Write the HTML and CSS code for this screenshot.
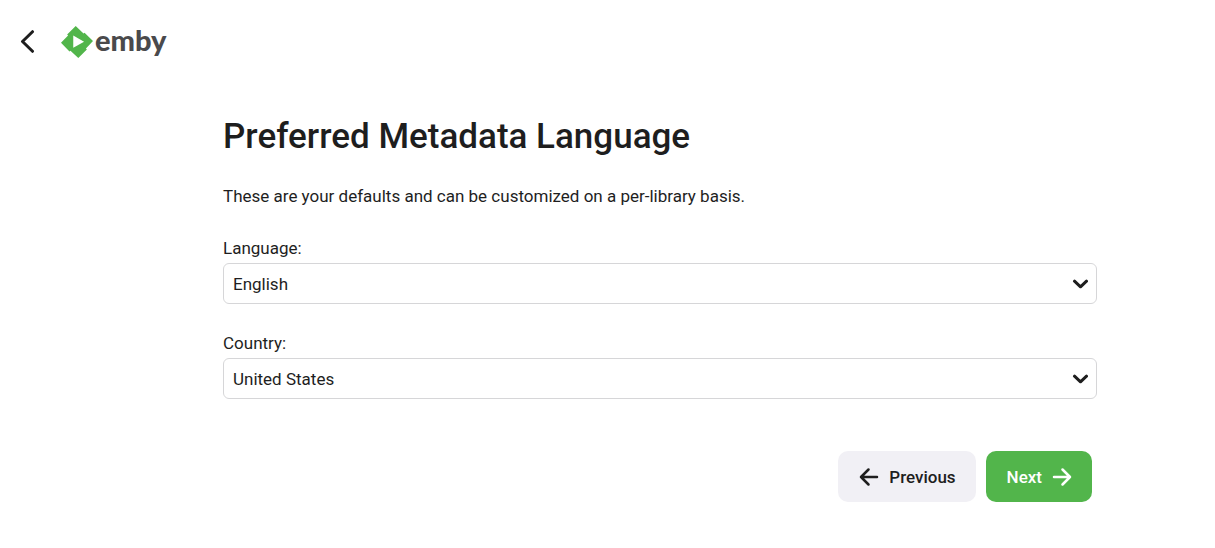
FILE: index.html
```html
<!DOCTYPE html>
<html lang="en">

<head>
  <meta charset="UTF-8">
  <meta name="viewport" content="width=device-width, initial-scale=1.0">
  <title>Emby</title>
  <link rel="stylesheet" href="styles.css">
</head>

<body>
  <header class="header">
    <button type="button" class="back-button" aria-label="Back">
      <svg viewBox="0 0 16 24" width="16" height="24">
        <path d="M12.500 1.700L2.500 11.500L12.500 21.300" />
      </svg>
    </button>
    <a href="#" class="logo">
      <svg class="logo-mark" viewBox="0 0 24 24" width="32" height="32" aria-hidden="true">
        <path d="M11.040 0L4.615 6.352L5.300 7.050L0 12.500L6.363 19.100L7.100 18.500L12.970 24L19.394 17.646L18.700 16.900L24 11.300L17.650 5.060L16.900 5.700Z" />
        <path class="logo-play" d="M9.200 7.200L17.300 11.800L9.200 16.300Z" />
      </svg>
      <span class="logo-text">emby</span>
    </a>
  </header>

  <main class="wizard">
    <h1>Preferred Metadata Language</h1>
    <p class="description">These are your defaults and can be customized on a per-library basis.</p>
    <form id="settings-form">
      <div class="form-group">
        <label for="language">Language:</label>
        <div class="select-box">
          <select id="language" name="language">
            <option selected>English</option>
          </select>
          <svg class="arrow" viewBox="0 0 16 10" width="16" height="10" aria-hidden="true">
            <path d="M2.500 2.200L8.500 7.800L14.500 2.200" />
          </svg>
        </div>
      </div>
      <div class="form-group">
        <label for="country">Country:</label>
        <div class="select-box">
          <select id="country" name="country">
            <option selected>United States</option>
          </select>
          <svg class="arrow" viewBox="0 0 16 10" width="16" height="10" aria-hidden="true">
            <path d="M2.500 2.200L8.500 7.800L14.500 2.200" />
          </svg>
        </div>
      </div>
      <div class="actions">
        <button type="button" class="button">
          <svg viewBox="0 0 20 20" width="20" height="20" aria-hidden="true">
            <path d="M9.500 2.500L2 10L9.500 17.500M2 10H18" />
          </svg>
          Previous
        </button>
        <button type="submit" class="button button-submit">
          Next
          <svg viewBox="0 0 20 20" width="20" height="20" aria-hidden="true">
            <path d="M10.500 2.500L18 10L10.500 17.500M18 10H2" />
          </svg>
        </button>
      </div>
    </form>
  </main>
</body>

</html>
```

FILE: styles.css
```css
* {
  box-sizing: border-box;
}

body {
  margin: 0;
  background-color: #fff;
  color: #1e1e1e;
  font-family: Roboto, sans-serif;
  font-size: 17px;
  line-height: 20px;
}

.header {
  display: flex;
  align-items: center;
  gap: 16px;
  height: 84px;
  padding: 0 10px;
}

.back-button {
  display: flex;
  align-items: center;
  justify-content: center;
  width: 35px;
  height: 40px;
  padding: 0;
  border: none;
  background: none;
  cursor: pointer;
}

svg {
  flex-shrink: 0;
  fill: none;
  stroke: #1e1e1e;
  stroke-width: 3;
  stroke-linecap: round;
  stroke-linejoin: round;
}

.logo {
  display: flex;
  align-items: center;
  gap: 2px;
  color: #4a4a4c;
  font-family: Lato, sans-serif;
  font-size: 29px;
  font-weight: 900;
  line-height: 32px;
  text-decoration: none;
}

.logo-mark {
  fill: #52b54b;
  stroke: none;
}

.logo-play {
  fill: #fff;
}

.logo-text {
  padding-bottom: 5px;
}

.wizard {
  padding: 31px 118px 40px 223px;
}

h1 {
  margin: 0;
  font-size: 35px;
  font-weight: 500;
  line-height: 44px;
}

.description {
  margin: 27px 0 32px;
}

.form-group {
  margin-bottom: 29px;
}

label {
  display: block;
  margin-bottom: 5px;
}

.select-box {
  display: grid;
  align-items: center;
}

.select-box select,
.select-box .arrow {
  grid-area: 1 / 1;
}

.select-box select {
  width: 100%;
  height: 41px;
  padding: 0 36px 0 9px;
  border: 1px solid #d6d6d8;
  border-radius: 6px;
  background-color: #fff;
  color: inherit;
  font: inherit;
  appearance: none;
}

.select-box .arrow {
  justify-self: end;
  margin-right: 9px;
  pointer-events: none;
}

.actions {
  display: flex;
  justify-content: flex-end;
  gap: 10px;
  margin-top: 52px;
  padding-right: 5px;
}

.button {
  display: flex;
  align-items: center;
  gap: 10px;
  height: 51px;
  padding: 0 20px 0 21px;
  border: none;
  border-radius: 10px;
  background-color: #f1f0f5;
  color: #1e1e1e;
  font: inherit;
  font-weight: 500;
  cursor: pointer;
}

.button svg {
  stroke-width: 2.5;
}

.button-submit {
  background-color: #52b54b;
  color: #fff;
}

.button-submit svg {
  stroke: #fff;
}
```
